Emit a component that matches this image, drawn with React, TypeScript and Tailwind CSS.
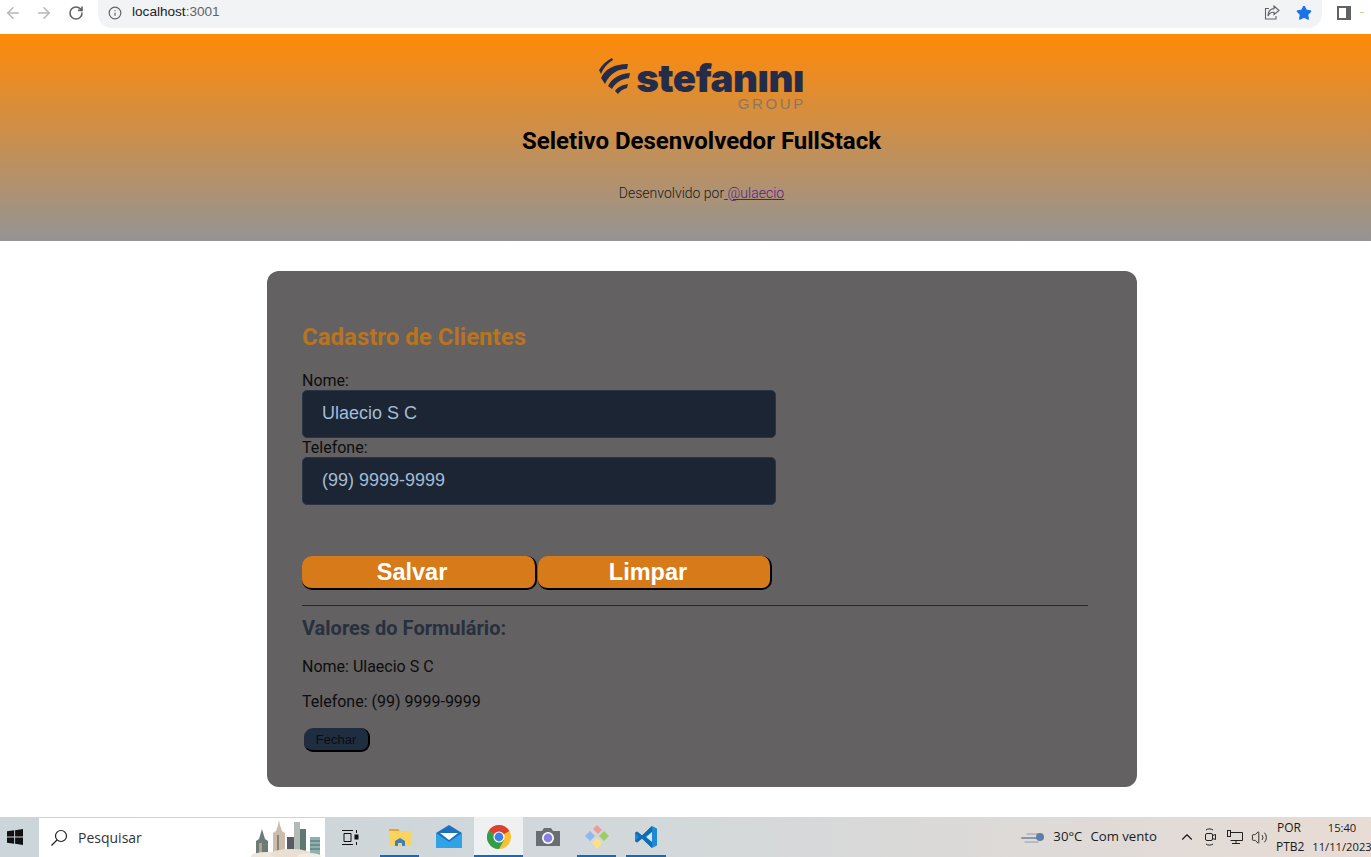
import React from "react";
import { ArrowLeft, ArrowRight, RotateCw, Info, Star, ChevronUp, Volume2 } from "lucide-react";

const StefaniniLogo = () => {
  return (
    <div className="flex items-start h-[73px]">
      <svg width="32" height="38" viewBox="0 0 32 38" className="mt-[2px] mr-[5px]" fill="#252c4a">
        <path d="M0 12C3 7 7 3 13 0L14 2C9 5 5 9 2 16Z" />
        <path d="M2 20C6 11 15 6 29 6L28 11C19 11 11 15 6 26Z" />
        <path d="M9 28C13 20 20 16 31 15L30 20C23 21 17 24 13 31Z" />
        <path d="M16 33C19 29 23 27 29 26L28 30C24 31 21 33 19 36Z" />
      </svg>
      <div className="flex flex-col items-end">
        <span className="font-['Inter',sans-serif] font-black text-[38.5px] leading-[38px] tracking-[-0.5px] text-[#252c4a] mt-[3px]">
          stefanını
        </span>
        <span className="font-['Liberation_Sans',sans-serif] text-[15px] leading-[12px] tracking-[2.6px] mr-[-2px] text-[#8a7763] mt-[1px]">
          GROUP
        </span>
      </div>
    </div>
  );
};

const BrowserBar = () => {
  return (
    <div className="flex h-[34px] bg-white items-start">
      <div className="flex items-center h-[25px] w-[98px] text-[#b4b6b9]">
        <ArrowLeft size={18} className="ml-[4px]" strokeWidth={2} />
        <ArrowRight size={18} className="ml-[13px]" strokeWidth={2} />
        <RotateCw size={16} className="ml-[15px] text-[#5f6368]" strokeWidth={2.4} />
      </div>
      <div className="flex items-center h-7 w-[1224px] bg-[#f1f3f4] rounded-b-[14px] pb-[3px] pl-[10px] pr-[10px]">
        <Info size={14} className="text-[#5f6368]" strokeWidth={2} />
        <span className="ml-[10px] text-[13.6px] text-[#5f6368] font-['Liberation_Sans',sans-serif]">
          <span className="text-[#202124]">localhost</span>:3001
        </span>
        <svg width="16" height="15" viewBox="0 0 16 15" fill="none" stroke="#5f6368" strokeWidth="1.1" className="ml-auto">
          <path d="M5 3.500H1.500V14H12V11" />
          <path d="M10 1 15 5.500 10 9.500V7.200C7 7 5 8.500 4 11C4 7 6 4 10 3.600Z" />
        </svg>
        <Star size={16} className="ml-[16px] text-[#1a73e8]" fill="#1a73e8" />
      </div>
      <div className="flex items-center h-[25px] ml-[15px]">
        <div className="w-[14px] h-[14px] border-2 border-[#5f6368] border-r-[5px] bg-white" />
        <div className="w-[4px] h-[1px] bg-[#d6c98a] ml-[9px]" />
      </div>
    </div>
  );
};

const Header = () => {
  return (
    <header className="flex flex-col items-center h-[207px] bg-[linear-gradient(to_bottom,#ff8a08,#949494)] pt-[22px] pl-[32px]">
      <StefaniniLogo />
      <h1 className="font-bold text-2xl leading-[28px] text-black mt-[-2px]">
        Seletivo Desenvolvedor FullStack
      </h1>
      <p className="text-sm font-light text-[#1a1a1a] mt-[30px] leading-[16px]">
        Desenvolvido por
        <a className="text-[#551a8b] underline" href="#">
          {" "}@ulaecio
        </a>
      </p>
    </header>
  );
};

const Field = ({ label, value }: { label: string; value: string }) => {
  return (
    <div className="flex flex-col">
      <label className="text-base leading-[19px] text-[#0d0d0d]">{label}</label>
      <input
        readOnly
        value={value}
        className="w-[474px] h-12 rounded-[5px] bg-[#1b2533] border border-[#2a3547] pl-[19px] pr-5 pb-[2px] text-lg text-[#a4bcd6] font-['Liberation_Sans',sans-serif] outline-none"
      />
    </div>
  );
};

const ClientForm = () => {
  return (
    <section className="w-[870px] h-[516px] bg-[#636162] rounded-xl pt-[52px] pl-[35px] pr-[49px]">
      <h2 className="text-2xl font-bold leading-[28px] text-[#b9741f]">Cadastro de Clientes</h2>
      <div className="mt-[20px]">
        <Field label="Nome:" value="Ulaecio S C" />
        <Field label="Telefone:" value="(99) 9999-9999" />
      </div>
      <div className="flex gap-px mt-[51px]">
        <button className="w-[235px] h-[34px] rounded-[10px] bg-[#d67a1a] pr-[13px] pt-[2px] border-r-2 border-b-2 border-black text-white text-[23.5px] font-bold leading-none font-['Liberation_Sans',sans-serif]">
          Salvar
        </button>
        <button className="w-[234px] h-[34px] rounded-[10px] bg-[#d67a1a] pr-[12px] pt-[2px] border-r-2 border-b-2 border-black text-white text-[23.5px] font-bold leading-none font-['Liberation_Sans',sans-serif]">
          Limpar
        </button>
      </div>
      <hr className="mt-[15px] border-t border-[#1f2937]" />
      <h3 className="mt-[10px] text-xl font-bold leading-[24px] text-[#27303f]">Valores do Formulário:</h3>
      <p className="mt-[17px] text-base leading-[19px] text-[#0d0d0d]">Nome: Ulaecio S C</p>
      <p className="mt-[16px] text-base leading-[19px] text-[#0d0d0d]">Telefone: (99) 9999-9999</p>
      <button className="block ml-[2px] mt-[17px] w-[66px] h-[24px] rounded-[9px] bg-[#1f2d40] border-r-2 border-b-2 border-black text-[13px] leading-none text-[#0d0d0d] font-['Liberation_Sans',sans-serif]">
        Fechar
      </button>
    </section>
  );
};

const FolderIcon = () => (
  <svg width="24" height="24" viewBox="0 0 24 24">
    <path d="M1 4h9l2 2H1z" fill="#e2a72e" />
    <rect x="1" y="6" width="22" height="15" fill="#fbd35f" />
    <path d="M7 21v-5l5-3 5 3v5h-3v-3h-4v3z" fill="#3f7fbf" />
  </svg>
);

const MailIcon = () => (
  <svg width="26" height="24" viewBox="0 0 26 24">
    <path d="M0 8 13 0l13 8v15H0z" fill="#1e72bd" />
    <path d="M4 8h18l-9 7z" fill="#fff" />
    <path d="M0 8l13 9 13-9v15H0z" fill="#2fa3e6" />
  </svg>
);

const ChromeIcon = () => (
  <svg width="24" height="24" viewBox="0 0 24 24" className="ml-[2px]">
    <circle cx="12" cy="12" r="12" fill="#fbc02d" />
    <path d="M12 12 1.600 6A12 12 0 0 1 22.400 6z" fill="#dd3f33" />
    <path d="M12 12 1.600 6A12 12 0 0 0 12 24l5-9z" fill="#2f9e48" />
    <circle cx="12" cy="12" r="5.600" fill="#fff" />
    <circle cx="12" cy="12" r="4.400" fill="#3f7fe8" />
  </svg>
);

const CameraIcon = () => (
  <svg width="24" height="20" viewBox="0 0 24 20">
    <path d="M0 4h6l2-3h7l2 3h7v15H0z" fill="#6a6e73" />
    <circle cx="12" cy="11" r="6" fill="#fff" />
    <circle cx="12" cy="11" r="4.400" fill="#8b7fe0" />
  </svg>
);

const GitIcon = () => (
  <svg width="26" height="26" viewBox="0 0 26 26">
    <path d="M13 1l5 5-4 4-5-5z" fill="#ef9a9a" />
    <path d="M6 7l5 5-5 5-5-5z" fill="#90b8f0" />
    <path d="M20 7l5 5-5 5-5-5z" fill="#9ccc65" />
    <path d="M13 14l5 5-5 6-5-6z" fill="#ffe082" />
  </svg>
);

const VSCodeIcon = () => (
  <svg width="24" height="24" viewBox="0 0 24 24">
    <path d="M18 1l5 2.500v17L18 23 8 13.500 3 17.500l-2-1.500v-8l2-1.500 5 4z" fill="#1f8ad2" />
    <path d="M18 1v22l-10-9.500-5 4-2-1.500 4-4-4-4 2-1.500 5 4z" fill="#0f6cb5" />
    <path d="M18 7l-6 5 6 5z" fill="#cfe8f7" />
  </svg>
);

const taskbarApps = [
  { name: "Explorador", icon: <FolderIcon />, underline: true, active: false },
  { name: "Email", icon: <MailIcon />, underline: false, active: false },
  { name: "Chrome", icon: <ChromeIcon />, underline: true, active: true },
  { name: "Camera", icon: <CameraIcon />, underline: false, active: false },
  { name: "Git", icon: <GitIcon />, underline: true, active: false },
  { name: "VS Code", icon: <VSCodeIcon />, underline: true, active: false },
];

const Taskbar = () => {
  return (
    <footer className="flex items-stretch h-[40px] bg-gradient-to-r from-[#cbd5da] via-[#d3d8da] to-[#e8dcd5] font-['Open_Sans',sans-serif] text-[#1a1a1a]">
      {/* Start */}
      <div className="flex items-center justify-center w-[39px] pr-[10px]">
        <svg width="16" height="16" viewBox="0 0 17 17" fill="#111">
          <path d="M0 2.400 7.600 1.300v6.600H0zM8.600 1.200 17 0v7.900H8.600zM0 9h7.600v6.700L0 14.600zM8.600 9H17v8l-8.400-1.200z" />
        </svg>
      </div>
      {/* Search */}
      <div className="flex items-center w-[286px] mt-px bg-white relative overflow-hidden">
        <svg width="18" height="18" viewBox="0 0 18 18" fill="none" stroke="#222" strokeWidth="1.2" className="ml-[11px]">
          <circle cx="11" cy="7" r="5.500" />
          <path d="M7 11 1.500 16.500" />
        </svg>
        <span className="ml-[10px] text-sm text-[#333]">Pesquisar</span>
        <svg width="78" height="38" viewBox="0 0 78 38" className="absolute right-0 bottom-0">
          <path d="M9 36V22l3-2 3-10 3 10 3 2v14z" fill="#6c7a78" />
          <path d="M12 36V24h3v12z" fill="#b89f86" />
          <path d="M26 36V14l3-2 2-6 1-5 1 5 2 6 3 2v22z" fill="#cbbcae" />
          <path d="M30 36V16h2v20z" fill="#8f8074" />
          <rect x="40" y="18" width="9" height="18" fill="#585c60" />
          <rect x="47" y="3" width="6" height="33" fill="#b2bab5" />
          <rect x="53" y="10" width="6" height="26" fill="#5f7871" />
          <rect x="63" y="18" width="10" height="18" fill="#8fb0b0" />
          <path d="M63 22h10M63 26h10M63 30h10" stroke="#4c6a6a" strokeWidth="1" />
          <ellipse cx="20" cy="37" rx="16" ry="4" fill="#efe7dc" />
          <ellipse cx="44" cy="35" rx="20" ry="5" fill="#e9dfd2" />
          <ellipse cx="62" cy="37" rx="12" ry="3" fill="#f1ebe2" />
        </svg>
      </div>
      {/* Task view */}
      <div className="flex items-center justify-center w-[50px]">
        <svg width="17" height="15" viewBox="0 0 17 15" fill="none" stroke="#111" strokeWidth="1">
          <path d="M0 .5h11M0 14.500h11M2 3.500h7v8H2zM14.500 0v3M14.500 12v3" />
          <rect x="13" y="5" width="3" height="4" fill="#111" />
        </svg>
      </div>
      {/* Apps */}
      {taskbarApps.map((app) => (
        <div
          key={app.name}
          className={`relative flex items-center justify-center w-[49.3px] ${app.active ? "bg-[#eef0f1]" : ""}`}
        >
          {app.icon}
          {app.underline && (
            <span
              className={`absolute bottom-0 h-[2px] bg-[#0f6cbd] ${app.active ? "left-0 right-0" : "left-[5px] right-[5px]"}`}
            />
          )}
        </div>
      ))}
      {/* Tray */}
      <div className="flex items-center ml-auto text-[13.2px] h-full">
        <svg width="24" height="16" viewBox="0 0 24 16" className="mr-[8px]">
          <path d="M1 9h17" stroke="#8a97a8" strokeWidth="2" strokeLinecap="round" />
          <path d="M6 5h11M4 13h13" stroke="#a6b2c0" strokeWidth="1.500" strokeLinecap="round" />
          <circle cx="19" cy="8" r="4" fill="#5f7fa8" />
        </svg>
        <span>30°C</span>
        <span className="ml-[8px]">Com vento</span>
        <ChevronUp size={18} className="ml-[21px]" strokeWidth={1.5} />
        <svg width="16" height="18" viewBox="0 0 16 18" fill="none" stroke="#222" strokeWidth="1" className="ml-[7px]">
          <rect x="2.500" y="5.500" width="7" height="7" rx="1.500" />
          <path d="M9.500 7.500l3-1v5l-3-1M3 2c2-1.500 5-1.500 7 0M3 16c2 1.500 5 1.500 7 0" />
        </svg>
        <svg width="18" height="16" viewBox="0 0 18 16" fill="none" stroke="#222" strokeWidth="1" className="ml-[7px]">
          <path d="M4.500 3.500H16.500V11.500H4.500M10 11.500V14.500M6 14.500h8" />
          <rect x="1.500" y="1.500" width="3" height="6" />
        </svg>
        <Volume2 size={17} className="ml-[7px] text-[#222]" strokeWidth={1.3} />
        <div className="flex flex-col items-start ml-[8px] text-xs leading-[19px] w-[37px]">
          <span className="ml-px">POR</span>
          <span>PTB2</span>
        </div>
        <div className="flex flex-col items-center text-[11.2px] leading-[19px] w-[58px] whitespace-nowrap">
          <span>15:40</span>
          <span>11/11/2023</span>
        </div>
      </div>
    </footer>
  );
};

const App = () => {
  return (
    <div className="flex flex-col h-[857px] bg-white font-['Roboto',sans-serif] overflow-hidden">
      <BrowserBar />
      <Header />
      <main className="flex-1 flex justify-center pt-[30px] pl-[33px]">
        <ClientForm />
      </main>
      <Taskbar />
    </div>
  );
};

export default App;
